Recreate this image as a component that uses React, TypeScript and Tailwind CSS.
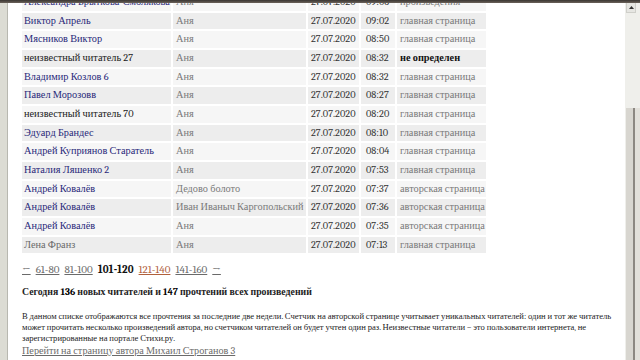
import React from "react";

type Row = {
  name: string;
  kind: "link" | "anon" | "gray";
  book: string;
  time: string;
  page: string;
  bold?: boolean;
};

const rows: Row[] = [
  { name: "Александра Брыткова-Смолякова", kind: "link", book: "Аня", time: "09:06", page: "произведения" },
  { name: "Виктор Апрель", kind: "link", book: "Аня", time: "09:02", page: "главная страница" },
  { name: "Мясников Виктор", kind: "link", book: "Аня", time: "08:50", page: "главная страница" },
  { name: "неизвестный читатель 27", kind: "anon", book: "Аня", time: "08:32", page: "не определен", bold: true },
  { name: "Владимир Козлов 6", kind: "link", book: "Аня", time: "08:32", page: "главная страница" },
  { name: "Павел Морозовв", kind: "link", book: "Аня", time: "08:27", page: "главная страница" },
  { name: "неизвестный читатель 70", kind: "anon", book: "Аня", time: "08:20", page: "главная страница" },
  { name: "Эдуард Брандес", kind: "link", book: "Аня", time: "08:10", page: "главная страница" },
  { name: "Андрей Куприянов Старатель", kind: "link", book: "Аня", time: "08:04", page: "главная страница" },
  { name: "Наталия Ляшенко 2", kind: "link", book: "Аня", time: "07:53", page: "главная страница" },
  { name: "Андрей Ковалёв", kind: "link", book: "Дедово болото", time: "07:37", page: "авторская страница" },
  { name: "Андрей Ковалёв", kind: "link", book: "Иван Иваныч Каргопольский", time: "07:36", page: "авторская страница" },
  { name: "Андрей Ковалёв", kind: "link", book: "Аня", time: "07:35", page: "авторская страница" },
  { name: "Лена Франз", kind: "gray", book: "Аня", time: "07:13", page: "главная страница" },
];

const nameColor = {
  link: "text-[#29297a]",
  anon: "text-[#1a1a1a]",
  gray: "text-[#6a6a6a]",
};

const App = () => {
  return (
    <div className="relative flex h-[360px] w-[640px] overflow-hidden bg-white font-serif">
      {/* top dark edge of the frame */}
      <div className="absolute left-0 top-0 h-[3px] w-full bg-gradient-to-b from-[#3a3632] to-[#6b625a]" />

      <div className="w-[8px] shrink-0 border-r border-[#b8b8b0] bg-[#dcdcd4]" />

      <div className="min-w-0 flex-1 pl-[12px]">
        <table className="-mt-[8px] w-[468px] table-fixed border-separate border-spacing-[2px] text-[10.3px] leading-none">
          <tbody>
            {rows.map((r, i) => (
              <tr key={i} className={i % 2 === 1 ? "bg-[#ededed]" : "bg-[#f6f6f6]"}>
                <td className={`h-[16.67px] w-[149px] overflow-hidden whitespace-nowrap px-[2px] ${nameColor[r.kind]}`}>
                  {r.name}
                </td>
                <td className="w-[133px] overflow-hidden whitespace-nowrap px-[3px] text-[#7a7a7a]">{r.book}</td>
                <td className="w-[51px] whitespace-nowrap px-[3px] text-[#333]">27.07.2020</td>
                <td className="w-[34px] whitespace-nowrap px-[5px] text-[#333]">{r.time}</td>
                <td
                  className={`w-[89px] overflow-hidden whitespace-nowrap pl-[3px] pr-0 ${
                    r.bold ? "font-bold text-[#111]" : "text-[#7a7a7a]"
                  }`}>
                  {r.page}
                </td>
              </tr>
            ))}
          </tbody>
        </table>

        <div className="mt-[7px] flex items-center gap-[5px] pl-[2px] text-[11px] text-[#6a6a6a]">
          <span className="underline">←</span>
          <span className="underline">61-80</span>
          <span className="underline">81-100</span>
          <span className="font-bold text-[#111]">101-120</span>
          <span className="text-[#b0603c] underline">121-140</span>
          <span className="underline">141-160</span>
          <span className="underline">→</span>
        </div>

        <p className="mt-[5px] pl-[2px] text-[9.8px] leading-[16px] font-bold text-[#1e1e1e]">
          Сегодня <span className="text-black">136</span> новых читателей и <span className="text-black">147</span>{" "}
          прочтений всех произведений
        </p>

        <p className="mt-[11px] whitespace-nowrap pl-[2px] text-[8.6px] leading-[11px] text-[#222]">
          В данном списке отображаются все прочтения за последние две недели. Счетчик на авторской странице учитывает
          уникальных читателей: один и тот же читатель
          <br />
          может прочитать несколько произведений автора, но счетчиком читателей он будет учтен один раз. Неизвестные
          читатели – это пользователи интернета, не
          <br />
          зарегистрированные на портале Стихи.ру.
        </p>

        <p className="mt-0 pl-[2px] text-[10.2px] leading-[14px] text-[#6a6a6a] underline">
          Перейти на страницу автора Михаил Строганов 3
        </p>
      </div>

      {/* scrollbar */}
      <div className="flex w-[15px] shrink-0 flex-col bg-[#efefeb]">
        <div className="ml-[1px] mr-[4px] mt-[2px] flex h-[11px] items-center justify-center border border-[#cfcfca] bg-[#e6e6e2]">
          <svg width="5" height="3" viewBox="0 0 5 3">
            <path d="M0 3 L2.5 0 L5 3 Z" fill="#333" />
          </svg>
        </div>
        <div className="flex-1" />
        <div className="flex h-[252px]">
          <div className="ml-[1px] w-[7px] bg-[#d8d6d0]" />
          <div className="w-[2px] bg-[#8c8882]" />
          <div className="flex-1 bg-[#e2e0da]" />
        </div>
      </div>
    </div>
  );
};

export default App;
